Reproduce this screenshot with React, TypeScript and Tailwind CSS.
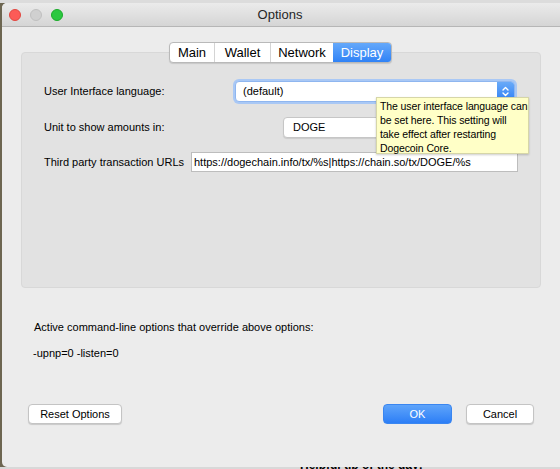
import React from 'react';

const ui = { fontFamily: '"Liberation Sans", Arial, sans-serif' };

function Chevrons() {
  return (
    <svg width="9" height="13" viewBox="0 0 9 13" fill="none" stroke="white" strokeWidth="1.4" strokeLinecap="round" strokeLinejoin="round">
      <path d="M2 5 L4.5 2.5 L7 5" />
      <path d="M2 8 L4.5 10.5 L7 8" />
    </svg>
  );
}

function Tabs() {
  const tabs = [
    { label: 'Main', w: 'w-[44px]' },
    { label: 'Wallet', w: 'w-[56px]' },
    { label: 'Network', w: 'w-[63px]' },
    { label: 'Display', w: 'w-[58px]' },
  ];
  return (
    <div className="flex h-[21px] rounded-[4px] border border-[#b9b9b9] bg-white overflow-hidden shadow-[0_1px_1px_rgba(0,0,0,0.12)]">
      {tabs.map((t, i) => (
        <div
          key={t.label}
          className={`${t.w} flex items-center justify-center text-[13px] ${
            t.label === 'Display'
              ? 'bg-gradient-to-b from-[#64a8fa] to-[#2f82f6] text-white'
              : 'text-black'
          } ${i > 0 && t.label !== 'Display' ? 'border-l border-[#d4d4d4]' : ''}`}
        >
          {t.label}
        </div>
      ))}
    </div>
  );
}

function Button({ children, primary, w }: { children: React.ReactNode; primary?: boolean; w: string }) {
  return (
    <div
      className={`${w} h-[20px] rounded-[4px] flex items-center justify-center text-[11px] ${
        primary
          ? 'bg-gradient-to-b from-[#5ea4fa] to-[#2c7ef6] text-white border border-[#3a86f0]'
          : 'bg-white text-black border border-[#c4c4c4] shadow-[0_1px_1px_rgba(0,0,0,0.15)]'
      }`}
    >
      {children}
    </div>
  );
}

export default function App() {
  return (
    <div className="relative w-[560px] h-[469px] overflow-hidden bg-[#6d6651]" style={ui}>
      <div className="h-[3px] bg-[#dcdcdc]" />
      <div className="ml-[2px] w-[600px] h-[464px] bg-[#ececec] rounded-t-[5px] rounded-b-[5px] flex flex-col">
        {/* title bar */}
        <div className="relative h-[24px] rounded-t-[5px] bg-gradient-to-b from-[#ebebeb] to-[#d5d5d5] border-b border-[#b6b6b6] flex items-center">
          <div className="flex items-center gap-[9px] pl-[7px]">
            <div className="w-[12px] h-[12px] rounded-full bg-[#fc5b57] border border-[#e2463f]" />
            <div className="w-[12px] h-[12px] rounded-full bg-[#d0d0d0] border border-[#c0c0c0]" />
            <div className="w-[12px] h-[12px] rounded-full bg-[#2bc840] border border-[#1aab29]" />
          </div>
          <div className="absolute left-0 w-[556px] text-center text-[13px] text-[#262626]">Options</div>
        </div>

        {/* tabbed panel */}
        <div className="relative mt-[25px] ml-[19px] w-[520px] h-[236px] rounded-[4px] bg-[#e2e2e2] border border-[#d8d8d8]">
          <div className="absolute top-[-11px] left-[147px]">
            <Tabs />
          </div>
          <div className="pt-[28px] flex flex-col text-[11px] text-black">
            <div className="flex items-center h-[21px]">
              <div className="w-[213px] pl-[22px]">User Interface language:</div>
              <div className="flex w-[280px] h-[21px] rounded-[4px] bg-white border border-[#8fb6ef] shadow-[0_0_0_2px_#a9c8f5]">
                <div className="flex-1 flex items-center pl-[7px]">(default)</div>
                <div className="w-[17px] rounded-r-[3px] bg-gradient-to-b from-[#69aaf8] to-[#2f80f5] flex items-center justify-center">
                  <Chevrons />
                </div>
              </div>
            </div>
            <div className="flex items-center h-[21px] mt-[15px]">
              <div className="w-[261px] pl-[22px]">Unit to show amounts in:</div>
              <div className="flex items-center w-[130px] h-[21px] rounded-[4px] bg-white border border-[#c6c6c6] pl-[9px] shadow-[0_1px_1px_rgba(0,0,0,0.1)]">
                DOGE
              </div>
            </div>
            <div className="flex items-center h-[20px] mt-[14px]">
              <div className="w-[169px] pl-[22px]">Third party transaction URLs</div>
              <div className="flex items-center w-[327px] h-[20px] bg-white border border-[#bdbdbd] pl-[2px]">
                https://dogechain.info/tx/%s|https://chain.so/tx/DOGE/%s
              </div>
            </div>
          </div>
        </div>

        {/* override info */}
        <div className="mt-[32px] pl-[32px] text-[11px] text-black leading-[14px]">
          Active command-line options that override above options:
        </div>
        <div className="mt-[12px] pl-[31px] text-[11px] text-black leading-[14px]">-upnp=0 -listen=0</div>

        {/* buttons */}
        <div className="mt-[44px] flex items-center w-[556px]">
          <div className="pl-[26px]">
            <Button w="w-[94px]">Reset Options</Button>
          </div>
          <div className="ml-auto flex gap-[14px] pr-[24px]">
            <Button primary w="w-[69px]">OK</Button>
            <Button w="w-[68px]">Cancel</Button>
          </div>
        </div>
      </div>
      <div className="h-[2px] bg-[#d8d8d8] pl-[300px] overflow-hidden">
        <div className="text-[12px] leading-[12px] text-black font-bold mt-[-8px]">Helpful tip of the day:</div>
      </div>

      {/* tooltip */}
      <div className="absolute left-[376px] top-[97px] w-[153px] h-[57px] bg-[#ffffc7] border border-[#d6d6a8] px-[3px] pt-[1px] text-[10.5px] tracking-[-0.1px] leading-[14px] text-black whitespace-nowrap shadow-[0_1px_2px_rgba(0,0,0,0.2)]">
        The user interface language can
        <br />
        be set here. This setting will
        <br />
        take effect after restarting
        <br />
        Dogecoin Core.
      </div>
    </div>
  );
}
